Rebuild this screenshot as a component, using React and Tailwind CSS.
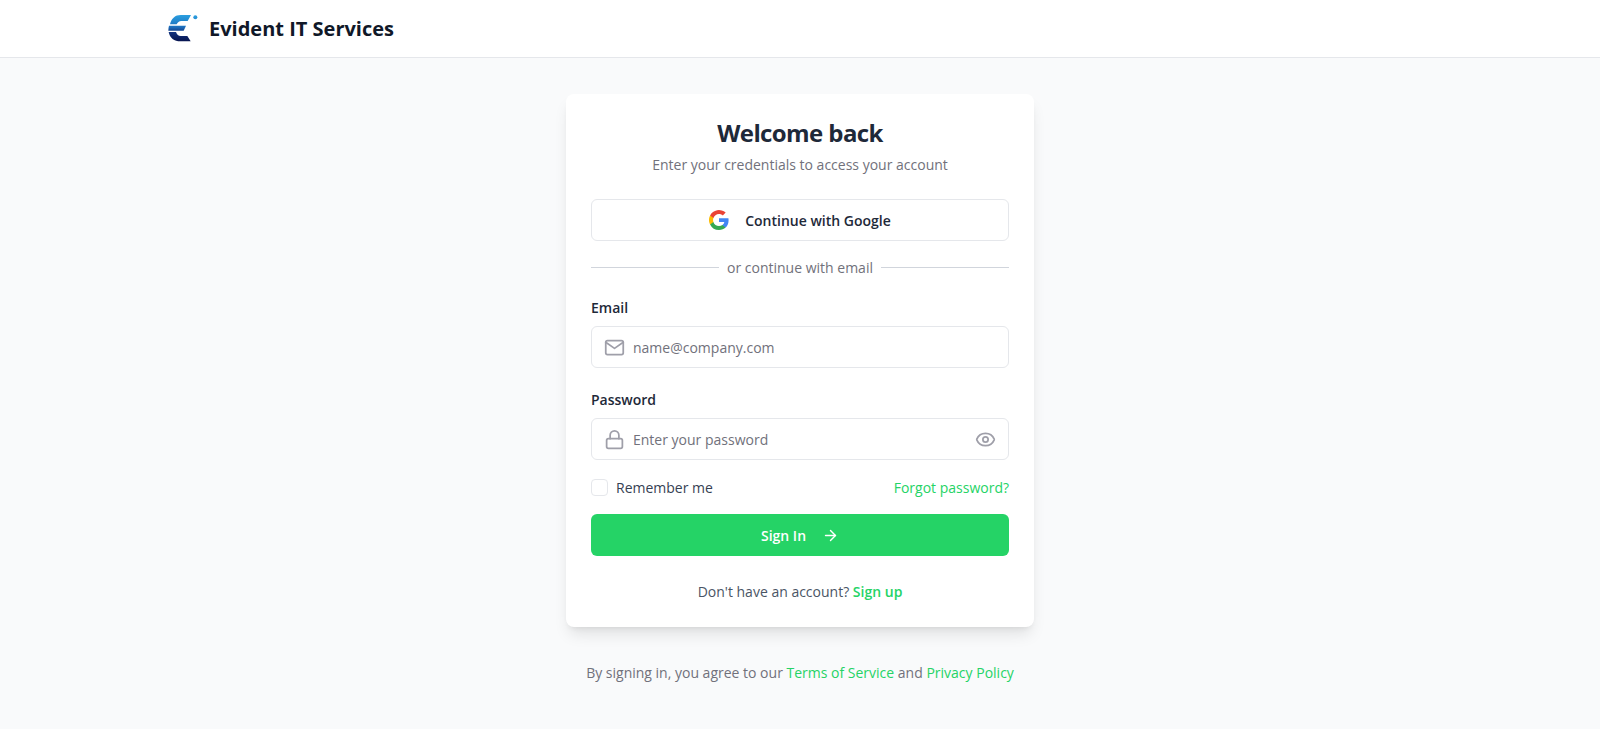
import { useState } from "react";
import { ArrowRight, Eye, EyeOff } from "lucide-react";
import { FiLock, FiMail } from "react-icons/fi";

function Logo() {
  return (
    <svg viewBox="0 0 90 84" className="w-[30px] h-7 shrink-0" aria-hidden="true">
      <defs>
        <linearGradient id="logo-fill" gradientUnits="userSpaceOnUse" x1="0" y1="0" x2="0" y2="80">
          <stop offset="0" stopColor="#2a9fe0" />
          <stop offset="0.45" stopColor="#1c6fbd" />
          <stop offset="0.65" stopColor="#12327e" />
          <stop offset="1" stopColor="#07144d" />
        </linearGradient>
      </defs>
      <g fill="url(#logo-fill)">
        <path d="M6 28C10 10 22 0 38 0H69L59 18H40C33 18 29 22 26 28Z" />
        <path d="M3 32H54L47 47H1Q1 39 3 32Z" />
        <path d="M2 51H24C27 59 31 63 38 63H58L68 79H37C19 79 5 69 2 51Z" />
        <circle cx="82" cy="7" r="6" />
      </g>
    </svg>
  );
}

function GoogleIcon() {
  return (
    <svg viewBox="0 0 24 24" className="size-5" aria-hidden="true">
      <path fill="#4285F4" d="M23.5 12.27c0-.85-.08-1.67-.22-2.45H12v4.64h6.45a5.52 5.52 0 0 1-2.39 3.62v3h3.87c2.27-2.09 3.57-5.16 3.57-8.81z" />
      <path fill="#34A853" d="M12 24c3.24 0 5.96-1.07 7.94-2.91l-3.88-3.01c-1.07.72-2.45 1.15-4.06 1.15-3.13 0-5.78-2.11-6.73-4.96H1.28v3.11A12 12 0 0 0 12 24z" />
      <path fill="#FBBC05" d="M5.27 14.27a7.2 7.2 0 0 1 0-4.54V6.62H1.28a12 12 0 0 0 0 10.76z" />
      <path fill="#EA4335" d="M12 4.77c1.76 0 3.35.61 4.59 1.8l3.44-3.44A11.97 11.97 0 0 0 1.28 6.62l3.99 3.11C6.22 6.88 8.87 4.77 12 4.77z" />
    </svg>
  );
}

function Field({ id, label, icon: Icon, action, ...rest }) {
  return (
    <div>
      <label htmlFor={id} className="block mb-2 font-semibold text-gray-800">{label}</label>
      <div className="flex items-center h-[42px] px-3 gap-2 rounded-md border border-gray-200">
        <Icon size={21} className="text-zinc-400 shrink-0" />
        <input
          id={id}
          className="flex-1 min-w-0 bg-transparent outline-none text-gray-800 placeholder:text-zinc-500"
          {...rest}
        />
        {action}
      </div>
    </div>
  );
}

export default function App() {
  const [email, setEmail] = useState("");
  const [password, setPassword] = useState("");
  const [remember, setRemember] = useState(false);
  const [showPassword, setShowPassword] = useState(false);

  return (
    <div className="min-h-screen flex flex-col bg-gray-50 font-['Open_Sans',sans-serif] text-sm leading-[21px]">
      <header className="bg-white border-b border-gray-200">
        <div className="max-w-7xl mx-auto h-[57px] px-2 flex items-center gap-[11px]">
          <Logo />
          <span className="text-xl font-bold text-gray-900">Evident IT Services</span>
        </div>
      </header>

      <main className="flex-1 flex flex-col items-center px-4 pt-9">
        <div className="w-full max-w-[468px] bg-white rounded-lg shadow-lg p-[25px]">
          <h1 className="text-2xl leading-7 font-bold tracking-tight text-center text-gray-800">Welcome back</h1>
          <p className="mt-[7px] text-center text-zinc-500">Enter your credentials to access your account</p>

          <button
            type="button"
            className="mt-6 w-full h-[42px] flex items-center justify-center gap-4 rounded-md border border-gray-200 font-semibold text-gray-800"
          >
            <GoogleIcon /> Continue with Google
          </button>

          <div className="mt-4 flex items-center gap-2 text-zinc-500">
            <div className="flex-1 border-t border-gray-300" />
            <span>or continue with email</span>
            <div className="flex-1 border-t border-gray-300" />
          </div>

          <form className="mt-[19px]" onSubmit={(e) => e.preventDefault()}>
            <div className="flex flex-col gap-[21px]">
              <Field
                id="email"
                label="Email"
                icon={FiMail}
                type="email"
                placeholder="name@company.com"
                value={email}
                onChange={(e) => setEmail(e.target.value)}
              />
              <Field
                id="password"
                label="Password"
                icon={FiLock}
                type={showPassword ? "text" : "password"}
                placeholder="Enter your password"
                value={password}
                onChange={(e) => setPassword(e.target.value)}
                action={
                  <button
                    type="button"
                    aria-label={showPassword ? "Hide password" : "Show password"}
                    onClick={() => setShowPassword(!showPassword)}
                    className="text-zinc-400"
                  >
                    {showPassword ? <EyeOff size={21} /> : <Eye size={21} />}
                  </button>
                }
              />
            </div>

            <div className="mt-[17px] flex items-center justify-between">
              <label htmlFor="remember" className="flex items-center gap-2 text-gray-700">
                <input
                  id="remember"
                  type="checkbox"
                  checked={remember}
                  onChange={(e) => setRemember(e.target.checked)}
                  className="appearance-none size-[17px] rounded border border-gray-200 checked:bg-[#25d366]"
                />
                Remember me
              </label>
              <a href="#forgot" className="text-[#25d366]">Forgot password?</a>
            </div>

            <button
              type="submit"
              className="mt-4 w-full h-[42px] flex items-center justify-center gap-4 rounded-md bg-[#25d366] font-semibold text-white"
            >
              Sign In <ArrowRight size={17} />
            </button>
          </form>

          <p className="mt-[25px] text-center text-gray-600">
            Don't have an account? <a href="#signup" className="font-semibold text-[#25d366]">Sign up</a>
          </p>
        </div>

        <p className="mt-[35px] text-center text-zinc-500">
          By signing in, you agree to our <a href="#terms" className="text-[#25d366]">Terms of Service</a> and{" "}
          <a href="#privacy" className="text-[#25d366]">Privacy Policy</a>
        </p>
      </main>
    </div>
  );
}
